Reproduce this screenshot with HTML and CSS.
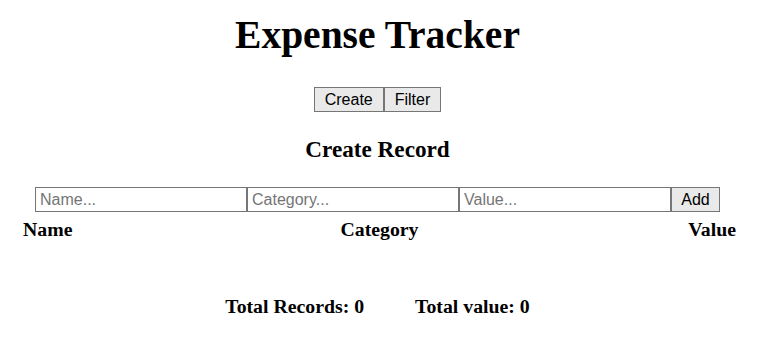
FILE: index.html
```html
<!DOCTYPE html>
<html>
<head>
<meta charset="utf-8">
<title>Expense Tracker</title>
<link rel="stylesheet" href="styles.css">
</head>
<body>
<div class="page">
  <h1 class="title">Expense Tracker</h1>
  <div class="tabs">
    <button class="btn">Create</button><button class="btn">Filter</button>
  </div>
  <h3 class="subtitle">Create Record</h3>
  <form class="record-form" onsubmit="return false">
    <input class="field" type="text" placeholder="Name...">
    <input class="field" type="text" placeholder="Category...">
    <input class="field" type="text" placeholder="Value...">
    <button class="btn add" type="submit">Add</button>
  </form>
  <div class="table-head">
    <div class="col left">Name</div>
    <div class="col center">Category</div>
    <div class="col right">Value</div>
  </div>
  <div class="totals">
    <span>Total Records: 0</span>
    <span>Total value: 0</span>
  </div>
</div>
</body>
</html>
```
FILE: styles.css
```css
html, body {
  margin: 0;
  padding: 0;
  background: #ffffff;
}
.page {
  width: 755px;
  display: flex;
  flex-direction: column;
  align-items: center;
  font-family: "Liberation Serif", "Times New Roman", serif;
  color: #000;
}
.title {
  margin: 13px 0 0;
  font-size: 39.5px;
  line-height: 45px;
  font-weight: bold;
}
.tabs {
  display: flex;
  margin-top: 29px;
}
.btn {
  height: 25px;
  box-sizing: border-box;
  padding: 0 10px;
  margin: 0;
  border: 1px solid #767676;
  border-radius: 0;
  background: #e9e9e9;
  color: #000;
  font-family: "Liberation Sans", Arial, sans-serif;
  font-size: 16px;
  line-height: 23px;
}
.subtitle {
  margin: 24px 0 0;
  font-size: 23.2px;
  line-height: 26px;
  font-weight: bold;
}
.record-form {
  display: flex;
  margin: 25px 0 0;
}
.field {
  width: 212px;
  height: 25px;
  box-sizing: border-box;
  margin: 0;
  padding: 0 4px;
  border: 1px solid #767676;
  border-radius: 0;
  font-family: "Liberation Sans", Arial, sans-serif;
  font-size: 16px;
  color: #000;
  background: #fff;
}
.field::placeholder {
  color: #757575;
}
.add {
  width: 49px;
  padding: 0;
}
.table-head {
  align-self: flex-start;
  margin: 6px 0 0 23px;
  width: 713px;
  display: grid;
  grid-template-columns: 1fr 1fr 1fr;
  font-size: 19.8px;
  line-height: 22px;
  font-weight: bold;
}
.left { text-align: left; }
.center { text-align: center; }
.right { text-align: right; }
.totals {
  display: flex;
  gap: 51px;
  margin-top: 55px;
  font-size: 19.8px;
  line-height: 22px;
  font-weight: bold;
}
```
